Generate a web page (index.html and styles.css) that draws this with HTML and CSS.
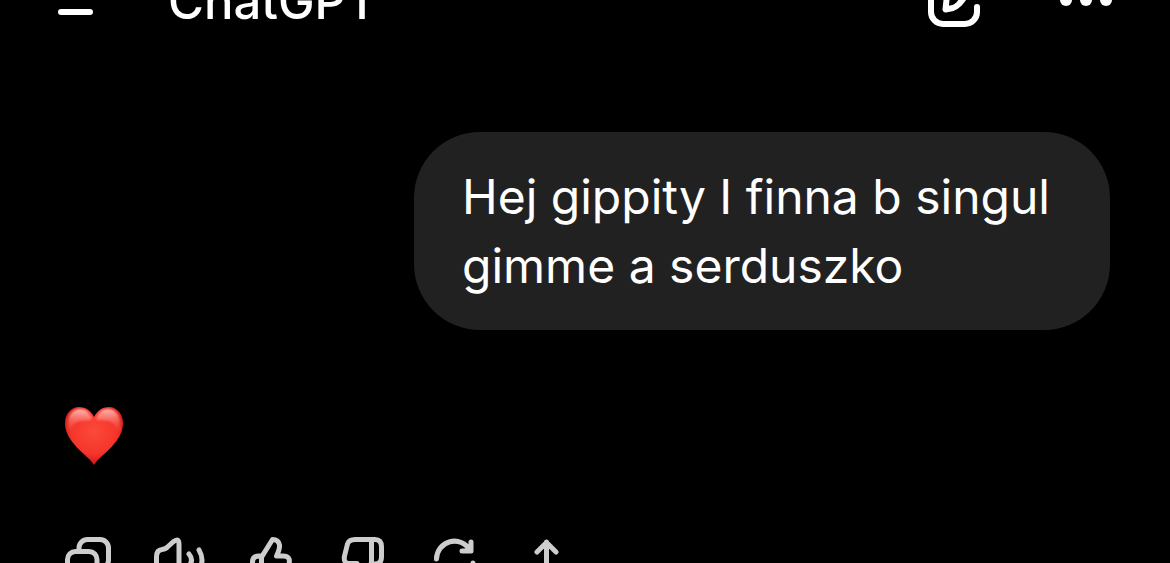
FILE: index.html
```html
<!DOCTYPE html>
<html lang="pl">
<head>
    <meta charset="UTF-8">
    <meta name="viewport" content="width=device-width, initial-scale=1.0">
    <title>ChatGPT</title>
    <link rel="stylesheet" href="styles.css">
</head>
<body>
    <header class="topbar">
        <button class="icon-button" aria-label="Menu">
            <svg width="56" height="60" viewBox="0 0 56 60">
                <path d="M3 22H53M3 42H32"/>
            </svg>
        </button>
        <h1 class="title">ChatGPT</h1>
        <div class="topbar-actions">
            <button class="icon-button" aria-label="New chat">
                <svg width="60" height="60" viewBox="0 0 60 60">
                    <path d="M28 8H18a12 12 0 0 0-12 12V42a12 12 0 0 0 12 12H40a12 12 0 0 0 12-12V37"/>
                    <path d="M20.500 39.500L21.500 30Q22 26 25 23L44 4q4-4 8 0t0 8L34 34Q31 37 28 38Z"/>
                </svg>
            </button>
            <button class="icon-button" aria-label="More">
                <svg width="60" height="60" viewBox="0 0 60 60">
                    <g class="dots">
                        <circle cx="10" cy="30" r="6"/>
                        <circle cx="30" cy="30" r="6"/>
                        <circle cx="50" cy="30" r="6"/>
                    </g>
                </svg>
            </button>
        </div>
    </header>

    <main class="chat">
        <p class="bubble">Hej gippity I finna b singul gimme a serduszko</p>

        <div class="reply">
            <svg class="heart" width="60" height="60" viewBox="0 0 60 60" role="img" aria-label="❤️">
                <defs>
                    <radialGradient id="heartFill" cx="0.5" cy="0.42" r="0.6">
                        <stop offset="0" stop-color="#fb4a39"/>
                        <stop offset="0.65" stop-color="#f5352b"/>
                        <stop offset="1" stop-color="#c81410"/>
                    </radialGradient>
                    <linearGradient id="heartShine" x1="0" y1="0" x2="0" y2="1">
                        <stop offset="0" stop-color="#ffc4bf" stop-opacity="0.95"/>
                        <stop offset="0.7" stop-color="#ff7a6c" stop-opacity="0.3"/>
                        <stop offset="1" stop-color="#ff7a6c" stop-opacity="0"/>
                    </linearGradient>
                    <filter id="soften">
                        <feGaussianBlur stdDeviation="1.2"/>
                    </filter>
                </defs>
                <path fill="url(#heartFill)" d="M30 59C26 52 17 47 10 38C4 31 1 24 1 17C1 8 7 1 15 1C22 1 27 5 30 11C33 5 38 1 45 1C53 1 59 8 59 17C59 24 56 31 50 38C43 47 34 52 30 59Z"/>
                <g fill="url(#heartShine)" filter="url(#soften)">
                    <path d="M4 17C4 9 9 3 16 3C22 3 26 7 28 13C26 15 21 14 16 15C10 16 7 21 5 27C4 24 4 20 4 17Z"/>
                    <path d="M56 17C56 9 51 3 44 3C38 3 34 7 32 13C34 15 39 14 44 15C50 16 53 21 55 27C56 24 56 20 56 17Z"/>
                </g>
            </svg>
        </div>

        <div class="actions">
            <button class="icon-button" aria-label="Copy">
                <svg width="56" height="56" viewBox="0 0 56 56">
                    <path d="M19 17V16a8.500 8.500 0 0 1 8.500-8.500H40a8.500 8.500 0 0 1 8.500 8.500V28a8.500 8.500 0 0 1-8.500 8.500H38"/>
                    <rect x="7.500" y="19.500" width="29.500" height="29" rx="8"/>
                </svg>
            </button>
            <button class="icon-button" aria-label="Read aloud">
                <svg width="56" height="56" viewBox="0 0 56 56">
                    <path d="M4.500 28V25Q4.500 18 10 17.500Q14 17 16 14.500L21 10Q27 5 27 12V44Q27 51 21 46L16 41.500Q14 39 10 38.500Q4.500 38 4.500 31Z"/>
                    <path d="M37 22Q42 28 37 34M47 18Q53 28 47 38"/>
                </svg>
            </button>
            <button class="icon-button" aria-label="Good response">
                <svg width="56" height="56" viewBox="0 0 56 56">
                    <path d="M17.500 24H15Q8.500 24 8.500 30V41Q8.500 48 15 48H34Q40 48 42 43L45 32Q47 24 39 24H32.500Q36 17 35.500 13Q34.500 7.500 28.500 7.500L19.500 22L17.500 25V48"/>
                </svg>
            </button>
            <button class="icon-button" aria-label="Bad response">
                <svg width="56" height="56" viewBox="0 0 56 56">
                    <path d="M35.500 7.500H19Q13 7.500 11.500 12L8.500 24Q7 31.500 14 31.500H21Q18 38 18 42Q19 48 25 48L34 33L35.500 31V7.500H39Q45.500 7.500 45.500 15V25Q45.500 32 39 32H36"/>
                </svg>
            </button>
            <button class="icon-button" aria-label="Regenerate">
                <svg width="56" height="56" viewBox="0 0 56 56">
                    <path d="M8.500 27A18 18 0 0 1 42 18M43 10V19H34"/>
                    <path d="M45 31A18 18 0 0 1 11 38M10 48V38H19"/>
                </svg>
            </button>
            <button class="icon-button" aria-label="Share">
                <svg width="56" height="56" viewBox="0 0 56 56">
                    <path d="M26.500 38V10M17 20L26.500 10.500L36 20M8 36V40Q8 48 16 48H37Q45 48 45 40V36"/>
                </svg>
            </button>
        </div>
    </main>
</body>
</html>
```
FILE: styles.css
```css
* {
    box-sizing: border-box;
}
html {
    height: 100%;
    overflow: hidden;
}
body {
    height: 100%;
    margin: 0;
    overflow: hidden;
    background-color: #000;
    color: #fff;
    font-family: Inter, "Liberation Sans", sans-serif;
}
svg {
    display: block;
    fill: none;
    stroke: currentColor;
    stroke-width: 6;
    stroke-linecap: round;
    stroke-linejoin: round;
}
.icon-button {
    padding: 0;
    border: none;
    background: none;
    color: inherit;
    cursor: pointer;
}
/* the bar is scrolled half way out of view */
.topbar {
    display: flex;
    align-items: center;
    height: 80px;
    margin-top: -40px;
    padding: 0 54px 0 58px;
}
.title {
    margin: 0 0 0 54px;
    padding-top: 4px;
    font-size: 49px;
    font-weight: 500;
    line-height: 60px;
}
.topbar-actions {
    display: flex;
    gap: 71px;
    margin-left: auto;
}
.dots {
    fill: currentColor;
    stroke: none;
}
.chat {
    display: flex;
    flex-direction: column;
    padding: 92px 60px 0;
}
.bubble {
    align-self: flex-end;
    max-width: 696px;
    margin: 0;
    padding: 30px 48px;
    border-radius: 66px;
    background-color: #212121;
    font-size: 48px;
    line-height: 69px;
}
.reply {
    padding: 76px 4px 66px;
}
.heart {
    stroke: none;
}
.actions {
    display: flex;
    gap: 36px;
    color: #cdcdcd;
}
.actions svg {
    stroke-width: 5;
}
```
